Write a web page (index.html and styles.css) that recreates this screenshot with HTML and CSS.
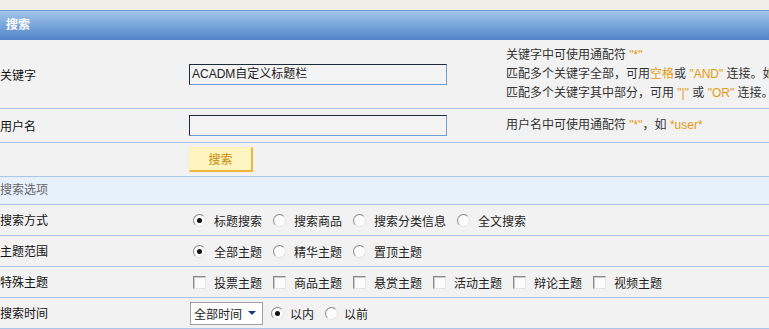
FILE: index.html
```html
<!DOCTYPE html>
<html lang="zh">
<head>
    <meta charset="UTF-8">
    <title>搜索</title>
    <link rel="stylesheet" href="styles.css">
</head>
<body>
    <div class="top-strip"></div>

    <!-- 搜索表单 -->
    <div class="search-box">
      <div class="box-title">搜索</div>

      <div class="row row-keyword">
        <div class="label">关键字</div>
        <div class="field"><span class="text-input">ACADM自定义标题栏</span></div>
        <div class="help">
          <p>关键字中可使用通配符 <em>"*"</em></p>
          <p>匹配多个关键字全部，可用<em>空格</em>或 <em>"AND"</em> 连接。如</p>
          <p>匹配多个关键字其中部分，可用 <em>"|"</em> 或 <em>"OR"</em> 连接。</p>
        </div>
      </div>

      <div class="row row-user">
        <div class="label">用户名</div>
        <div class="field"><span class="text-input"></span></div>
        <div class="help">
          <p>用户名中可使用通配符 <em>"*"</em>，如 <em>*user*</em></p>
        </div>
      </div>

      <div class="row row-submit">
        <div class="label"></div>
        <div class="field"><span class="btn">搜索</span></div>
        <div class="help"></div>
      </div>

      <div class="section-title">搜索选项</div>

      <div class="row row-option">
        <div class="label">搜索方式</div>
        <div class="options">
          <span class="opt"><i class="radio checked"></i>标题搜索</span>
          <span class="opt"><i class="radio"></i>搜索商品</span>
          <span class="opt"><i class="radio"></i>搜索分类信息</span>
          <span class="opt"><i class="radio"></i>全文搜索</span>
        </div>
      </div>

      <div class="row row-option">
        <div class="label">主题范围</div>
        <div class="options">
          <span class="opt"><i class="radio checked"></i>全部主题</span>
          <span class="opt"><i class="radio"></i>精华主题</span>
          <span class="opt"><i class="radio"></i>置顶主题</span>
        </div>
      </div>

      <div class="row row-option">
        <div class="label">特殊主题</div>
        <div class="options">
          <span class="opt"><i class="check"></i>投票主题</span>
          <span class="opt"><i class="check"></i>商品主题</span>
          <span class="opt"><i class="check"></i>悬赏主题</span>
          <span class="opt"><i class="check"></i>活动主题</span>
          <span class="opt"><i class="check"></i>辩论主题</span>
          <span class="opt"><i class="check"></i>视频主题</span>
        </div>
      </div>

      <div class="row row-option row-time">
        <div class="label">搜索时间</div>
        <div class="options">
          <span class="select">全部时间<i class="arrow"></i></span>
          <span class="opt"><i class="radio checked"></i>以内</span>
          <span class="opt"><i class="radio"></i>以前</span>
        </div>
      </div>
    </div>
</body>
</html>
```

FILE: styles.css
```css
/* 重置样式 */
* {
  box-sizing: border-box;
  margin: 0;
  padding: 0;
}

body {
  font-family: "Liberation Sans", "Noto Sans CJK SC", sans-serif;
  font-size: 12px;
  color: #222;
  background-color: #f2f2f2;
  overflow: hidden;
}

.top-strip {
  height: 10px;
  background-color: #eeeee6;
}

/* 标题栏 */
.box-title {
  height: 30px;
  line-height: 29px;
  padding-left: 6px;
  color: #fff;
  font-weight: bold;
  border-top: 1px solid #6f9ad6;
  background: linear-gradient(#a3c5ec, #4f83c9);
}

/* 表单行 */
.row {
  display: grid;
  grid-template-columns: 189px 317px 1fr;
  align-items: center;
  border-bottom: 1px solid #a9c5ea;
  white-space: nowrap;
}

.label {
  color: #111;
  padding-bottom: 1px;
}

.help {
  color: #333;
  line-height: 19px;
  overflow: hidden;
}

.help em {
  font-style: normal;
  color: #e39a12;
}

.row-keyword {
  height: 69px;
  padding-top: 1px;
}

.row-user,
.row-submit {
  height: 34px;
}

.text-input {
  display: block;
  width: 258px;
  height: 21px;
  line-height: 19px;
  padding-left: 2px;
  border: 1px solid;
  border-color: #1f2b3a #6f9bd8 #6f9bd8 #1f2b3a;
  background-color: #f3f3f3;
}

.btn {
  display: inline-block;
  width: 64px;
  height: 25px;
  line-height: 24px;
  text-align: center;
  color: #c78a00;
  background-color: #fff5c2;
  border: 1px solid #fff0b4;
  border-right: 2px solid #f2b43a;
  border-bottom: 2px solid #f2b43a;
}

/* 搜索选项 */
.section-title {
  height: 28px;
  line-height: 26px;
  color: #666;
  background-color: #e7f1fc;
  border-bottom: 1px solid #a9c5ea;
}

.row-option {
  height: 31px;
}

.options {
  grid-column: 2 / 4;
  display: flex;
  align-items: center;
  padding-left: 4px;
}

.opt {
  display: inline-flex;
  align-items: center;
  margin-right: 11px;
  padding-top: 1px;
}

.radio,
.check {
  display: inline-block;
  width: 13px;
  height: 13px;
  margin-right: 8px;
  border: 1px solid;
  border-color: #8a8a8a #e4e4e4 #e4e4e4 #8a8a8a;
  background-color: #fbfbfb;
  position: relative;
}

.radio {
  border-radius: 50%;
}

.radio.checked::after {
  content: "";
  position: absolute;
  left: 3px;
  top: 3px;
  width: 5px;
  height: 5px;
  border-radius: 50%;
  background-color: #111;
}

.check {
  box-shadow: inset 1px 1px 0 #c8c8c8;
}

/* 时间下拉框 */
.row-time .options {
  padding-left: 1px;
}

.row-time .radio {
  margin-right: 6px;
}

.select {
  display: inline-flex;
  align-items: center;
  justify-content: space-between;
  width: 73px;
  height: 23px;
  padding: 0 6px 0 3px;
  margin-right: 8px;
  background-color: #fff;
  border: 1px solid #a0a0a0;
}

.arrow {
  width: 0;
  height: 0;
  border-left: 4px solid transparent;
  border-right: 4px solid transparent;
  border-top: 4px solid #1c3a8c;
}
```
